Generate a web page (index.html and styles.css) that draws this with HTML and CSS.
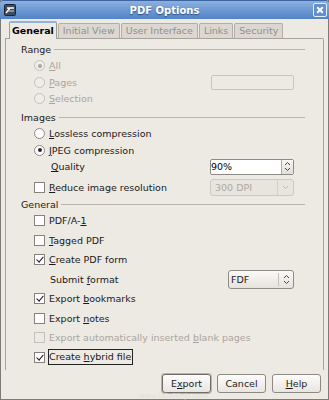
FILE: index.html
```html
<!DOCTYPE html>
<html>
<head>
<meta charset="utf-8">
<link rel="stylesheet" href="styles.css">
</head>
<body>
<div class="window">
  <div class="titlebar">
    <span class="wicon">
      <svg width="12" height="12" viewBox="0 0 12 12"><rect x="0.5" y="0.5" width="11" height="11" rx="1" fill="#3b4a5c" stroke="#223"/><path d="M2 9 L6 4 L10 4 M6 4 L3 4" stroke="#fff" stroke-width="1.3" fill="none"/><path d="M4 7 L10 7" stroke="#cfd8e4" stroke-width="1"/></svg>
    </span>
    <span class="title">PDF Options</span>
    <span class="close">
      <svg width="14" height="14" viewBox="0 0 14 14"><rect x="0.5" y="0.5" width="13" height="13" rx="1.5" fill="#5f8fd0" stroke="#e8eef8"/><path d="M4.2 4.2 L9.8 9.8 M9.8 4.2 L4.2 9.8" stroke="#fff" stroke-width="2"/></svg>
    </span>
  </div>
  <div class="content">
    <div class="tabs">
      <div class="tab active">General</div>
      <div class="tab">Initial View</div>
      <div class="tab">User Interface</div>
      <div class="tab">Links</div>
      <div class="tab">Security</div>
    </div>
    <div class="panel">
      <div class="heading"><span>Range</span><i></i></div>
      <div class="row disabled"><span class="radio on"></span><span><u>A</u>ll</span></div>
      <div class="row disabled"><span class="radio"></span><span><u>P</u>ages</span><span class="entry"></span></div>
      <div class="row disabled"><span class="radio"></span><span><u>S</u>election</span></div>

      <div class="heading gap2"><span>Images</span><i></i></div>
      <div class="row"><span class="radio"></span><span><u>L</u>ossless compression</span></div>
      <div class="row"><span class="radio on"></span><span><u>J</u>PEG compression</span></div>
      <div class="row"><span class="sub"><u>Q</u>uality</span>
        <span class="spin"><span class="spin-text">90%</span><span class="spin-btn"><svg width="7" height="11" viewBox="0 0 7 11"><path d="M1 4 L3.5 1.5 L6 4 M1 7 L3.5 9.5 L6 7" stroke="#444" stroke-width="1" fill="none"/></svg></span></span>
      </div>
      <div class="row gap5"><span class="check"></span><span><u>R</u>educe image resolution</span>
        <span class="combo dis"><span class="combo-text">300 DPI</span><span class="combo-btn"><svg width="7" height="5" viewBox="0 0 7 5"><path d="M1 1 L3.5 3.5 L6 1" stroke="#bbb" stroke-width="1" fill="none"/></svg></span></span>
      </div>

      <div class="heading"><span>General</span><i></i></div>
      <div class="grow first"><span class="check"></span><span>PDF/A-<u>1</u></span></div>
      <div class="grow"><span class="check"></span><span><u>T</u>agged PDF</span></div>
      <div class="grow"><span class="check on"></span><span><u>C</u>reate PDF form</span></div>
      <div class="grow"><span class="sub2">Submit <u>f</u>ormat</span>
        <span class="fdf"><span class="fdf-text">FDF</span><span class="fdf-btn"><svg width="7" height="11" viewBox="0 0 7 11"><path d="M1 4 L3.5 1.5 L6 4 M1 7 L3.5 9.5 L6 7" stroke="#444" stroke-width="1" fill="none"/></svg></span></span>
      </div>
      <div class="grow"><span class="check on"></span><span>Export <u>b</u>ookmarks</span></div>
      <div class="grow"><span class="check"></span><span>Export <u>n</u>otes</span></div>
      <div class="grow disabled"><span class="check"></span><span>Export automatically inserted <u>b</u>lank pages</span></div>
      <div class="grow"><span class="check on"></span><span class="focus">Create <u>h</u>ybrid file</span></div>
    </div>
    <div class="buttons">
      <span class="btn default">E<u>x</u>port</span>
      <span class="btn">Cancel</span>
      <span class="btn"><u>H</u>elp</span>
    </div>
    <div class="watermark">www.OOoNinja.com</div>
  </div>
</div>
</body>
</html>
```
FILE: styles.css
```css
html, body { margin: 0; padding: 0; }
body { width: 329px; height: 400px; overflow: hidden; background: #ede9e3; }
.window {
  width: 329px; height: 400px; box-sizing: border-box;
  background: #ede9e3;
  border: 1px solid #7b7b78; border-top: none;
  font-family: "DejaVu Sans", sans-serif; font-size: 9.5px; color: #1a1a1a;
  position: relative;
}
.titlebar {
  height: 19px; margin: 0 -1px;
  background: linear-gradient(#8cb1df, #6f9bd4 45%, #5283c6);
  border-top: 1px solid #3d63a0; box-sizing: border-box;
  border-radius: 3px 3px 0 0;
  display: flex; align-items: center; position: relative;
}
.wicon { margin-left: 4px; display: flex; }
.title {
  position: absolute; left: 0; right: 0; text-align: center;
  color: #fff; font-weight: bold; font-size: 10px;
  text-shadow: 0 1px 1px #2a4c80;
}
.close { margin-left: auto; margin-right: 2px; display: flex; }
.content { padding: 2px 4px 0 4px; }
.tabs { display: flex; align-items: flex-end; height: 17px; padding-left: 4px; position: relative; z-index: 1; }
.tab {
  height: 15px; box-sizing: border-box; padding: 0 4px; margin-right: 1px;
  background: #dcd8d1; border: 1px solid #b2aea6; border-bottom: none;
  border-radius: 2px 2px 0 0; color: #938f8a; display: flex; align-items: center;
  line-height: 1;
}
.tab.active {
  height: 18px; margin-bottom: -1px; background: #ede9e3; color: #000; font-weight: bold;
  border-color: #9d9992; border-top: 2px solid #8fb2dc; padding: 0 2px;
}
.panel {
  border: 1px solid #a7a39c; border-bottom: none; height: 332px;
  padding: 2px 0 0 15px; box-sizing: border-box;
  border-radius: 0 2px 0 0;
}
.heading { height: 16.5px; display: flex; align-items: center; }
.heading span { margin-right: 3px; }
.heading i { flex: 1; height: 1px; background: #b9b5ae; margin-right: 18px; }
.gap2 { margin-top: 2px; }
.gap5 { margin-top: 4.5px; }
.row { height: 16.5px; display: flex; align-items: center; padding-left: 13px; }
.grow { height: 19.5px; display: flex; align-items: center; padding-left: 13px; }
.grow.first { margin-top: -1.5px; height: 19.5px; }
.disabled { color: #aaa69f; }
.radio {
  width: 9px; height: 9px; border: 1px solid #8d8a86; border-radius: 50%;
  background: #fff; margin-right: 4px; position: relative; flex: none;
}
.disabled .radio { border-color: #c4c0ba; background: #f0ede9; }
.radio.on::after {
  content: ""; position: absolute; left: 2.5px; top: 2.5px; width: 4px; height: 4px;
  border-radius: 50%; background: #2a2a2a;
}
.disabled .radio.on::after { background: #a8a49e; }
.check {
  width: 9px; height: 9px; border: 1px solid #85827e; background: #fff;
  margin-right: 4px; flex: none; position: relative;
}
.disabled .check { border-color: #c4c0ba; background: #edeae6; }
.check.on::after {
  content: ""; position: absolute; left: 3px; top: 0px; width: 2.5px; height: 6px;
  border: solid #222; border-width: 0 1.5px 1.5px 0; transform: rotate(40deg);
}
.sub { margin-left: 17px; }
.sub2 { margin-left: 16px; }
.entry {
  margin-left: auto; margin-right: 29px; width: 83px; height: 15px; box-sizing: border-box;
  border: 1px solid #c9c5be; border-radius: 2px; background: #ede9e3;
}
.spin {
  margin-left: auto; margin-right: 29px; width: 84px; height: 16px; box-sizing: border-box;
  border: 1px solid #8e8a84; background: #fff; display: flex; border-radius: 2px;
}
.spin-text { flex: 1; padding-left: 0; line-height: 14px; color: #000; }
.spin-btn {
  width: 11px; border-left: 1px solid #aaa; background: linear-gradient(#f8f7f5, #e2ded8);
  display: flex; align-items: center; justify-content: center;
}
.combo {
  margin-left: auto; margin-right: 29px; width: 84px; height: 17px; box-sizing: border-box;
  border: 1px solid #cdc9c2; border-radius: 3px; background: #e8e4de; display: flex;
}
.combo-text { flex: 1; padding-left: 4px; line-height: 15px; color: #aca8a1; }
.combo-btn { width: 15px; border-left: 1px solid #d3cfc8; display: flex; align-items: center; justify-content: center; }
.fdf {
  margin-left: auto; margin-right: 29px; width: 66px; height: 19px; box-sizing: border-box;
  border: 1px solid #8f8b85; border-radius: 3px; background: linear-gradient(#fbfaf9, #e6e2dc); display: flex;
}
.fdf-text { flex: 1; padding-left: 2px; line-height: 17px; }
.fdf-btn { width: 14px; border-left: 1px solid #c4c0b9; margin: 2px 0; display: flex; align-items: center; justify-content: center; }
.focus { border: 1px solid #222; padding: 1px 1px 2px 0; margin-left: -1px; }
.buttons { display: flex; justify-content: flex-end; gap: 6px; padding-right: 3px; margin-top: 4px; }
.btn {
  width: 49px; height: 19px; box-sizing: border-box; border: 1px solid #8c8882; border-radius: 3px;
  background: linear-gradient(#fdfcfb, #e9e5e0); display: flex; align-items: center; justify-content: center;
}
.btn.default { box-shadow: 0 0 0 1px #b8b3ab; border-color: #6f6b66; }
.watermark {
  position: absolute; left: 138px; top: 392px; font-size: 7px; color: #e4e0da;
}
```
